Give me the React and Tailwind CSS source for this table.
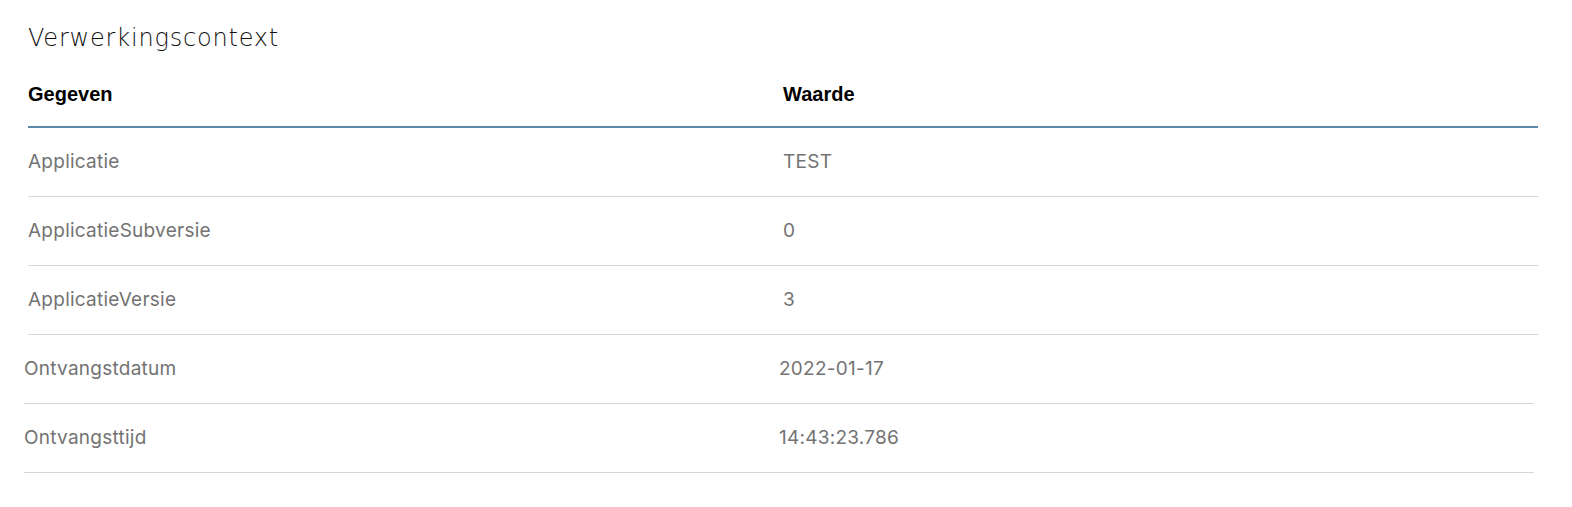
const rowsTop = [
  { key: 'Applicatie', value: 'TEST' },
  { key: 'ApplicatieSubversie', value: '0' },
  { key: 'ApplicatieVersie', value: '3' },
]

const rowsBottom = [
  { key: 'Ontvangstdatum', value: '2022-01-17' },
  { key: 'Ontvangsttijd', value: '14:43:23.786' },
]

function Row({ item }) {
  return (
    <div className="grid grid-cols-2 h-[69px] items-center border-b border-[#d6d6d6] text-[19px] tracking-[0.25px] text-[#737373] font-['Inter',sans-serif]">
      <div className="pt-[1px]">{item.key}</div>
      <div className="pt-[1px]">{item.value}</div>
    </div>
  )
}

export default function App() {
  return (
    <div className="bg-white min-h-[507px] pt-[22px]">
      <h1 className="ml-[28px] text-[24px] leading-[32px] font-extralight tracking-[0.8px] text-[#111111] font-['DejaVu_Sans',sans-serif]">
        Verwerkingscontext
      </h1>
      <div className="ml-[28px] w-[1510px] mt-[20px]">
        <div className="grid grid-cols-2 h-[54px] items-center border-b-2 border-[#5b8aa6] text-[20px] font-bold text-black font-['Liberation_Sans',sans-serif] pb-[12px]">
          <div>Gegeven</div>
          <div>Waarde</div>
        </div>
        {rowsTop.map((r) => (
          <Row key={r.key} item={r} />
        ))}
      </div>
      <div className="ml-[24px] w-[1510px]">
        {rowsBottom.map((r) => (
          <Row key={r.key} item={r} />
        ))}
      </div>
    </div>
  )
}
